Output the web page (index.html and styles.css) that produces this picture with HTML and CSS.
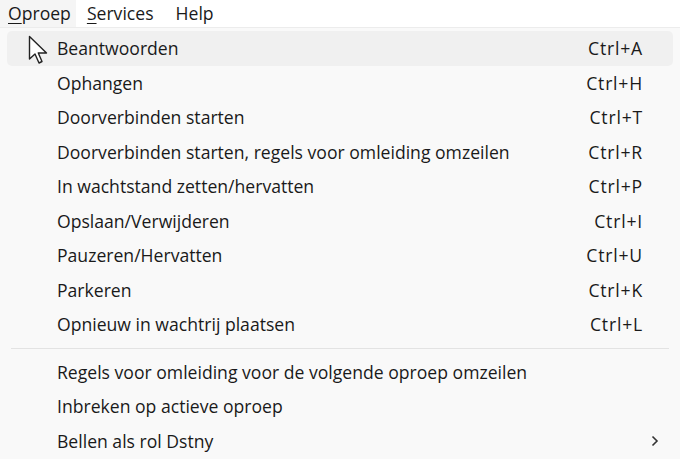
FILE: index.html
```html
<!DOCTYPE html>
<html lang="en">
<head>
<meta charset="UTF-8">
<meta name="viewport" content="width=device-width, initial-scale=1.0">
<title>Oproep menu</title>
<link rel="stylesheet" href="styles.css">
</head>
<body>
<div class="menubar">
    <div class="bar-item open"><u>O</u>proep</div>
    <div class="bar-item"><u>S</u>ervices</div>
    <div class="bar-item">Help</div>
</div>
<div class="menu">
    <div class="row hover"><span class="label">Beantwoorden</span><span class="key">Ctrl+A</span></div>
    <div class="row"><span class="label">Ophangen</span><span class="key">Ctrl+H</span></div>
    <div class="row"><span class="label">Doorverbinden starten</span><span class="key">Ctrl+T</span></div>
    <div class="row"><span class="label">Doorverbinden starten, regels voor omleiding omzeilen</span><span class="key">Ctrl+R</span></div>
    <div class="row"><span class="label">In wachtstand zetten/hervatten</span><span class="key">Ctrl+P</span></div>
    <div class="row"><span class="label">Opslaan/Verwijderen</span><span class="key">Ctrl+I</span></div>
    <div class="row"><span class="label">Pauzeren/Hervatten</span><span class="key">Ctrl+U</span></div>
    <div class="row"><span class="label">Parkeren</span><span class="key">Ctrl+K</span></div>
    <div class="row"><span class="label">Opnieuw in wachtrij plaatsen</span><span class="key">Ctrl+L</span></div>
    <div class="separator"></div>
    <div class="row"><span class="label">Regels voor omleiding voor de volgende oproep omzeilen</span></div>
    <div class="row"><span class="label">Inbreken op actieve oproep</span></div>
    <div class="row"><span class="label">Bellen als rol Dstny</span>
        <svg class="chevron" width="8" height="12" viewBox="0 0 8 12"><path d="M1.5 1.5 L6 6 L1.5 10.5" fill="none" stroke="#333" stroke-width="1.6"/></svg>
    </div>
</div>
<svg class="cursor" width="21" height="31" viewBox="0 0 21 31">
    <path d="M1.5 1.5 L1.5 24 L7 19 L11 28 L14 26.5 L10.3 18 L18.5 18 Z" fill="#fff" stroke="#222" stroke-width="1.4" stroke-linejoin="round"/>
</svg>
</body>
</html>
```

FILE: styles.css
```css
body {
    margin: 0;
    background: #f9f9f9;
    font-family: "Open Sans", "Noto Sans", sans-serif;
    font-size: 17.6px;
    color: #1a1a1a;
    position: relative;
    height: 459px;
    overflow: hidden;
}
.menubar {
    display: flex;
    height: 27px;
    background: #ffffff;
    border-bottom: 1px solid #ececec;
}
.bar-item {
    padding: 0 11px;
    line-height: 27px;
}
.bar-item.open {
    background: #f5f5f5;
    padding: 0 5px 0 8px;
}
.bar-item u {
    text-decoration-thickness: 1px;
    text-underline-offset: 3px;
}
.menu {
    padding: 3px 7px 0 7px;
}
.row {
    display: flex;
    align-items: center;
    height: 34.5px;
    padding: 0 30px 0 50px;
    border-radius: 5px;
}
.row.hover {
    background: #f0f0f0;
}
.label {
    flex: 1;
}
.key {
    text-align: right;
    letter-spacing: 0.8px;
}
.chevron {
    margin-right: -16px;
}
.separator {
    height: 1px;
    background: #e3e3e3;
    margin: 6px 4px 6px 4px;
}
.cursor {
    position: absolute;
    left: 28px;
    top: 35px;
}
```
